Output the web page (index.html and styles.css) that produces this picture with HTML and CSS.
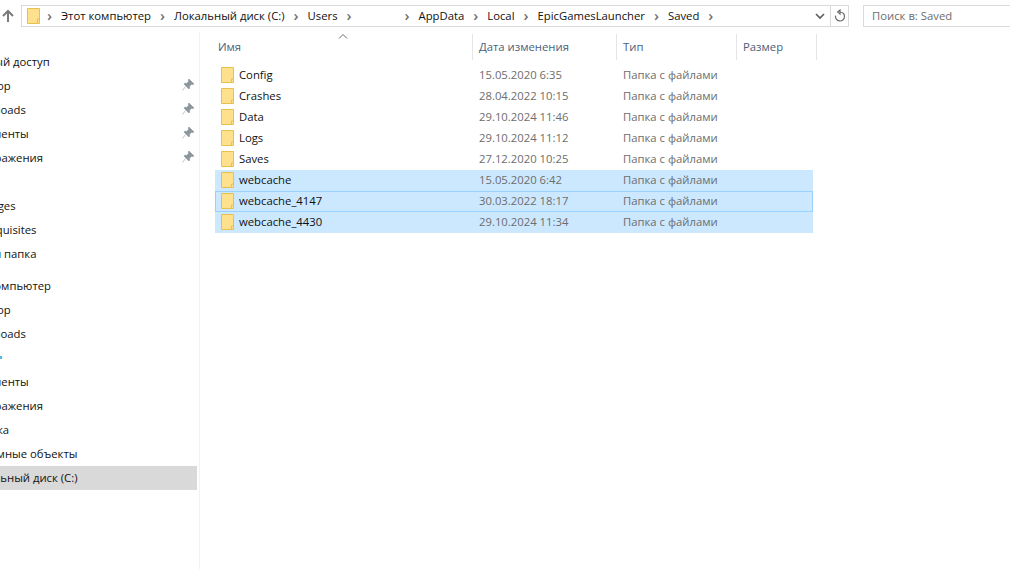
FILE: index.html
```html
<!DOCTYPE html>
<html lang="ru">
  <head>
    <title>Saved</title>
    <meta name="viewport" content="width=device-width, initial-scale=1" />
    <link rel="stylesheet" href="styles.css">
  </head>
  <body>
    <div class="barra">
      <svg class="flecha-arriba" width="14" height="14" viewBox="0 0 14 14"><path d="M7 13V2M2 7l5-5 5 5" fill="none" stroke="#7a7a7a" stroke-width="2"/></svg>
      <div class="direccion">
        <svg class="carpeta" width="13" height="16" viewBox="0 0 13 16"><path d="M.5.5h12v15H.5z" fill="#ffe08c" stroke="#e8c04e"/><path d="M10.500 15.500V11h2" fill="none" stroke="#e8c04e"/></svg>
        <span class="sep">›</span><span class="ruta">Этот компьютер</span>
        <span class="sep">›</span><span class="ruta">Локальный диск (C:)</span>
        <span class="sep">›</span><span class="ruta">Users</span>
        <span class="sep">›</span><span class="ruta oculto"></span>
        <span class="sep">›</span><span class="ruta">AppData</span>
        <span class="sep">›</span><span class="ruta">Local</span>
        <span class="sep">›</span><span class="ruta">EpicGamesLauncher</span>
        <span class="sep">›</span><span class="ruta">Saved</span>
        <span class="sep">›</span>
        <div class="direccion-fin">
          <svg width="10" height="7" viewBox="0 0 10 7"><path d="M1 1l4 4 4-4" fill="none" stroke="#5f5f5f" stroke-width="1.7"/></svg>
          <div class="recargar">
            <svg width="12" height="14" viewBox="0 0 12 14"><path d="M6 3a4.5 4.5 0 1 1-4.4 3.6M6 1v4L3.6 3z" fill="none" stroke="#6a6a6a" stroke-width="1.2"/></svg>
          </div>
        </div>
      </div>
      <div class="buscar">Поиск в: Saved</div>
    </div>

    <div class="contenedor">
      <nav class="lateral">
        <div class="grupo">
          <div class="nodo raiz">Быстрый доступ</div>
          <div class="nodo">Desktop<svg class="pin" width="12" height="12" viewBox="0 0 12 12"><path d="M7 0l5 5-1.2.6-1.2-.4L7.5 7.300l.2 1.900-.8.800-5-5 .8-.8 1.900.2 2.100-2.100-.4-1.200z M3.500 7.500L.5 11.500" fill="#8b959c" stroke="#8b959c" stroke-width=".6"/></svg></div>
          <div class="nodo">Downloads<svg class="pin" width="12" height="12" viewBox="0 0 12 12"><path d="M7 0l5 5-1.2.6-1.2-.4L7.5 7.300l.2 1.900-.8.800-5-5 .8-.8 1.900.2 2.100-2.100-.4-1.200z M3.500 7.500L.5 11.500" fill="#8b959c" stroke="#8b959c" stroke-width=".6"/></svg></div>
          <div class="nodo">Документы<svg class="pin" width="12" height="12" viewBox="0 0 12 12"><path d="M7 0l5 5-1.2.6-1.2-.4L7.5 7.300l.2 1.900-.8.800-5-5 .8-.8 1.900.2 2.100-2.100-.4-1.200z M3.500 7.500L.5 11.500" fill="#8b959c" stroke="#8b959c" stroke-width=".6"/></svg></div>
          <div class="nodo">Изображения<svg class="pin" width="12" height="12" viewBox="0 0 12 12"><path d="M7 0l5 5-1.2.6-1.2-.4L7.5 7.300l.2 1.900-.8.800-5-5 .8-.8 1.900.2 2.100-2.100-.4-1.200z M3.500 7.500L.5 11.500" fill="#8b959c" stroke="#8b959c" stroke-width=".6"/></svg></div>
          <div class="nodo vacio"></div>
          <div class="nodo">Packages</div>
          <div class="nodo">Prerequisites</div>
          <div class="nodo">Новая папка</div>
        </div>
        <div class="grupo">
          <div class="nodo raiz">Этот компьютер</div>
          <div class="nodo">Desktop</div>
          <div class="nodo">Downloads</div>
          <div class="nodo"><span class="marca"></span></div>
          <div class="nodo">Документы</div>
          <div class="nodo">Изображения</div>
          <div class="nodo">Музыка</div>
          <div class="nodo">Объемные объекты</div>
          <div class="nodo activo">Локальный диск (C:)</div>
        </div>
      </nav>

      <main class="archivos">
        <div class="cabecera">
          <div class="col col-nombre">Имя<svg class="orden" width="10" height="5" viewBox="0 0 10 5"><path d="M1 4.500l4-4 4 4" fill="none" stroke="#6d6d6d"/></svg></div>
          <div class="col">Дата изменения</div>
          <div class="col">Тип</div>
          <div class="col">Размер</div>
        </div>
        <div class="lista">
          <div class="fila">
            <div class="nombre"><svg class="ico" width="13" height="16" viewBox="0 0 13 16"><path d="M.5.5h12v15H.5z" fill="#ffe08c" stroke="#e8c04e"/><path d="M10.500 15.500V12h2" fill="none" stroke="#e8c04e"/></svg>Config</div>
            <div class="fecha">15.05.2020 6:35</div><div class="tipo">Папка с файлами</div>
          </div>
          <div class="fila">
            <div class="nombre"><svg class="ico" width="13" height="16" viewBox="0 0 13 16"><path d="M.5.5h12v15H.5z" fill="#ffe08c" stroke="#e8c04e"/><path d="M10.500 15.500V12h2" fill="none" stroke="#e8c04e"/></svg>Crashes</div>
            <div class="fecha">28.04.2022 10:15</div><div class="tipo">Папка с файлами</div>
          </div>
          <div class="fila">
            <div class="nombre"><svg class="ico" width="13" height="16" viewBox="0 0 13 16"><path d="M.5.5h12v15H.5z" fill="#ffe08c" stroke="#e8c04e"/><path d="M10.500 15.500V12h2" fill="none" stroke="#e8c04e"/></svg>Data</div>
            <div class="fecha">29.10.2024 11:46</div><div class="tipo">Папка с файлами</div>
          </div>
          <div class="fila">
            <div class="nombre"><svg class="ico" width="13" height="16" viewBox="0 0 13 16"><path d="M.5.5h12v15H.5z" fill="#ffe08c" stroke="#e8c04e"/><path d="M10.500 15.500V12h2" fill="none" stroke="#e8c04e"/></svg>Logs</div>
            <div class="fecha">29.10.2024 11:12</div><div class="tipo">Папка с файлами</div>
          </div>
          <div class="fila">
            <div class="nombre"><svg class="ico" width="13" height="16" viewBox="0 0 13 16"><path d="M.5.5h12v15H.5z" fill="#ffe08c" stroke="#e8c04e"/><path d="M10.500 15.500V12h2" fill="none" stroke="#e8c04e"/></svg>Saves</div>
            <div class="fecha">27.12.2020 10:25</div><div class="tipo">Папка с файлами</div>
          </div>
          <div class="fila marcada">
            <div class="nombre"><svg class="ico" width="13" height="16" viewBox="0 0 13 16"><path d="M.5.5h12v15H.5z" fill="#ffe08c" stroke="#e8c04e"/><path d="M10.500 15.500V12h2" fill="none" stroke="#e8c04e"/></svg>webcache</div>
            <div class="fecha">15.05.2020 6:42</div><div class="tipo">Папка с файлами</div>
          </div>
          <div class="fila marcada foco">
            <div class="nombre"><svg class="ico" width="13" height="16" viewBox="0 0 13 16"><path d="M.5.5h12v15H.5z" fill="#ffe08c" stroke="#e8c04e"/><path d="M10.500 15.500V12h2" fill="none" stroke="#e8c04e"/></svg>webcache_4147</div>
            <div class="fecha">30.03.2022 18:17</div><div class="tipo">Папка с файлами</div>
          </div>
          <div class="fila marcada">
            <div class="nombre"><svg class="ico" width="13" height="16" viewBox="0 0 13 16"><path d="M.5.5h12v15H.5z" fill="#ffe08c" stroke="#e8c04e"/><path d="M10.500 15.500V12h2" fill="none" stroke="#e8c04e"/></svg>webcache_4430</div>
            <div class="fecha">29.10.2024 11:34</div><div class="tipo">Папка с файлами</div>
          </div>
        </div>
      </main>
    </div>
  </body>
</html>
```

FILE: styles.css
```css
* {
  box-sizing: border-box;
}

html,
body {
  height: 100%;
}

body {
  margin: 0;
  background-color: #ffffff;
  color: #111111;
  font-family: "Open Sans", "Noto Sans", sans-serif;
  font-size: 11.3px;
  overflow: hidden;
}

.barra {
  height: 32px;
  padding-top: 5px;
  display: flex;
  align-items: flex-start;
}

.flecha-arriba {
  flex: none;
  margin: 4px 0 0 1px;
}

.direccion {
  flex: none;
  width: 828px;
  height: 22px;
  margin-left: 6px;
  padding-left: 5px;
  border: 1px solid #d9d9d9;
  display: flex;
  align-items: center;
}

.carpeta {
  flex: none;
  margin-right: -2px;
}

.sep {
  width: 23px;
  padding-bottom: 2px;
  color: #6f6f6f;
  font-size: 15px;
  font-weight: 600;
  line-height: 18px;
  text-align: center;
}

.ruta {
  padding-bottom: 2px;
  white-space: nowrap;
}

.oculto {
  width: 35px;
}

.direccion-fin {
  margin-left: auto;
  height: 100%;
  display: flex;
  align-items: center;
}

.recargar {
  height: 100%;
  width: 18px;
  margin-left: 5px;
  border-left: 1px solid #d9d9d9;
  display: flex;
  align-items: center;
  justify-content: center;
}

.buscar {
  flex: none;
  width: 160px;
  height: 22px;
  margin-left: 14px;
  padding-left: 8px;
  border: 1px solid #d9d9d9;
  color: #6d6d6d;
  line-height: 19px;
}

.contenedor {
  height: 537px;
  display: flex;
}

.lateral {
  flex: none;
  width: 200px;
  padding: 18px 2px 0 0;
  border-right: 1px solid #f2f2f2;
}

.grupo + .grupo {
  margin-top: 8px;
}

.nodo {
  height: 24px;
  padding-bottom: 2px;
  display: flex;
  align-items: center;
  white-space: nowrap;
  text-indent: -33px;
}

.raiz {
  text-indent: -39px;
}

.activo {
  background-color: #d9d9d9;
}

.pin {
  margin-left: auto;
  margin-right: 3px;
}

.marca {
  width: 2px;
  height: 3px;
  background-color: #54b4f0;
}

.archivos {
  flex: 1;
  padding-top: 2px;
}

.cabecera {
  height: 26px;
  display: grid;
  grid-template-columns: 273px 144px 120px 80px;
  color: #4c607a;
}

.col {
  padding: 5px 0 0 6px;
  border-right: 1px solid #e5e5e5;
  position: relative;
}

.col-nombre {
  padding-left: 18px;
}

.orden {
  position: absolute;
  top: 0;
  left: 138px;
}

.lista {
  margin: 5px 0 0 15px;
  width: 598px;
}

.fila {
  height: 21px;
  display: grid;
  grid-template-columns: 264px 144px 1fr;
  align-items: center;
}

.marcada {
  background-color: #cce8ff;
}

.foco {
  box-shadow: inset 0 0 0 1px #99d1ff;
}

.nombre {
  padding: 0 0 2px 6px;
  display: flex;
  align-items: center;
  white-space: nowrap;
}

.ico {
  flex: none;
  margin-right: 5px;
}

.fecha,
.tipo {
  padding-bottom: 2px;
  color: #6d6d6d;
  white-space: nowrap;
}
```
